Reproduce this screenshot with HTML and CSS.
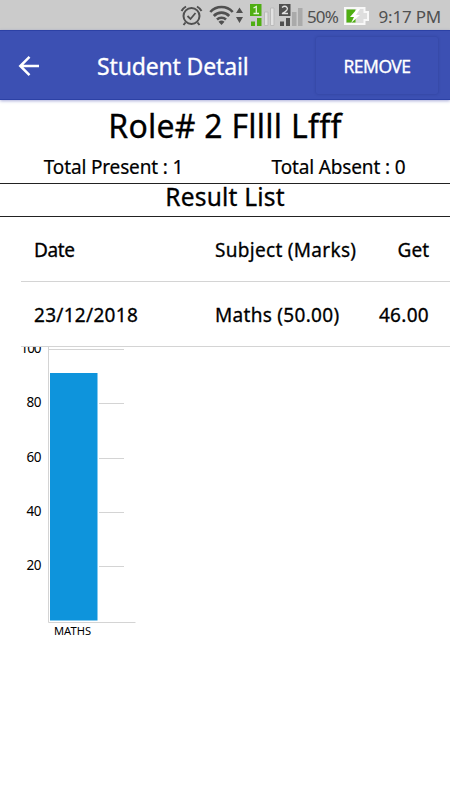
FILE: index.html
```html
<!DOCTYPE html>
<html lang="en">
<head>
    <meta charset="UTF-8">
    <meta name="viewport" content="width=device-width, initial-scale=1.0">
    <title>Student Detail</title>
    <link rel="stylesheet" href="styles.css">
</head>
<body>
    <div class="status-bar">
        <svg class="status-icons" width="132" height="30" viewBox="0 0 132 30">
            <!-- alarm -->
            <g fill="none" stroke="#505050" stroke-width="2">
                <circle cx="13.500" cy="16" r="8"/>
                <path d="M9.500 16l3 3 5-6" stroke-width="1.800"/>
                <path d="M3.500 11a12 12 0 0 1 4.500-4.500M19 6.500a12 12 0 0 1 4.500 4.500"/>
                <path d="M7.500 22.500l-2 2.500M19.500 22.500l2 2.500"/>
            </g>
            <!-- wifi -->
            <g fill="none" stroke="#505050" stroke-width="2.600">
                <path d="M32.300 12a15 15 0 0 1 22.400 0"/>
                <path d="M35.800 16a10.500 10.500 0 0 1 15.400 0"/>
                <path d="M39 19.500a6.500 6.500 0 0 1 9 0"/>
            </g>
            <path d="M43.500 25l-3-3.200a4.500 4.500 0 0 1 6 0z" fill="#505050"/>
            <path d="M58 13l3.500-5.500 3.500 5.500zM58 17l3.500 6 3.500-6z" fill="#505050"/>
            <!-- sim 1 -->
            <rect x="72" y="4" width="11.500" height="12" fill="#4fae12"/>
            <path d="M75.500 8l2.800-1.500v7M75.500 13.500h5.500" fill="none" stroke="#e4f4d8" stroke-width="1.300"/>
            <path d="M73 21.500h4v4.500h-4zM79 18h4.500v8h-4.500z" fill="#4fae12"/>
            <path d="M86.500 12h3.500v13.500h-3.500zM92.500 8h3.500v17.500h-3.500z" fill="#e2e2e2" stroke="#bbb"/>
            <!-- sim 2 -->
            <rect x="101" y="4" width="11.500" height="12" fill="#505050"/>
            <path d="M104 7.500q3-2.500 5 0t-5 6h6" fill="none" stroke="#e0e0e0" stroke-width="1.300"/>
            <path d="M102 21.500h4v4.500h-4zM108 18h4v8h-4z" fill="#505050"/>
            <path d="M114 12h4.500v14h-4.500zM120 8h4.500v18h-4.500z" fill="#aaa"/>
        </svg>
        <span class="battery-text">50%</span>
        <svg class="battery" width="26" height="18" viewBox="0 0 26 18">
            <path d="M1 1h19.500v4h3.500v8h-3.500v4h-19.500z" fill="#dedede" stroke="#f8f8f8" stroke-width="2"/>
            <rect x="2.500" y="2.500" width="9" height="13" fill="#4fae12"/>
            <path d="M13 2l-7 8h4l-3 6 9-8h-4l4-6z" fill="#fff"/>
        </svg>
        <span class="clock">9:17 PM</span>
    </div>

    <div class="toolbar">
        <svg class="back" width="22" height="22" viewBox="0 0 22 22" fill="none" stroke="#fff" stroke-width="2.500">
            <path d="M21 11H3M11.500 1.800L2.300 11l9.200 9.200"/>
        </svg>
        <h1>Student Detail</h1>
        <button type="button" class="remove-btn">REMOVE</button>
    </div>

    <div class="container">
        <h2 class="student-name">Role# 2 Fllll Lfff</h2>
        <div class="attendance">
            <span>Total Present : 1</span>
            <span>Total Absent : 0</span>
        </div>
        <h3 class="result-title">Result List</h3>
        <div class="result-row header">
            <span class="date">Date</span>
            <span class="subject">Subject (Marks)</span>
            <span class="marks">Get</span>
        </div>
        <div class="result-row">
            <span class="date">23/12/2018</span>
            <span class="subject">Maths (50.00)</span>
            <span class="marks">46.00</span>
        </div>
        <svg class="chart" width="450" height="300" viewBox="0 347 450 300">
            <path d="M48.500 347v275.500h87M48 349.500h76M99 403.500h25M99 458.500h25M99 512.500h25M99 566.500h25" fill="none" stroke="#d4d4d4"/>
            <rect x="50" y="373" width="47.500" height="247.500" fill="#0e94dc"/>
            <g class="axis" text-anchor="end">
                <text x="41.500" y="352.500" textLength="21">100</text>
                <text x="41.500" y="407" textLength="15">80</text>
                <text x="41.500" y="461.500" textLength="15">60</text>
                <text x="41.500" y="515.500" textLength="15">40</text>
                <text x="41.500" y="570" textLength="15">20</text>
            </g>
            <text class="bar-label" x="54" y="635" textLength="37" lengthAdjust="spacingAndGlyphs">MATHS</text>
        </svg>
    </div>
</body>
</html>
```

FILE: styles.css
```css
body {
    font-family: 'Noto Sans', 'Open Sans', sans-serif;
    background-color: #fff;
    color: #000;
    margin: 0;
    padding: 0;
}

h1, h2, h3 {
    margin: 0;
    font-weight: 400;
    white-space: nowrap;
}

.status-bar {
    display: flex;
    align-items: center;
    height: 30px;
    padding: 0 9px 0 178px;
    box-sizing: border-box;
    background-color: #cbcbcb;
    color: #505050;
    font-size: 17px;
    white-space: nowrap;
}

.status-icons {
    flex: none;
}

.battery-text {
    width: 34px;
    margin-top: 3px;
    letter-spacing: -0.9px;
    margin-left: -3px;
}

.battery {
    flex: none;
    margin-left: 3px;
    margin-top: 1px;
}

.clock {
    margin-left: auto;
    margin-top: 3px;
    letter-spacing: -0.2px;
}

.toolbar {
    display: flex;
    align-items: center;
    height: 70px;
    padding: 0 12px 0 18px;
    box-sizing: border-box;
    background-color: #3c50b3;
    border-top: 1px solid #2c41a5;
    border-bottom: 1px solid #2c41a5;
    box-shadow: 0 1px 3px rgba(40, 50, 160, 0.4);
    color: #fff;
}

.back {
    margin-top: 2px;
}

.toolbar h1 {
    margin-left: 57px;
    margin-top: 2px;
    font-size: 23px;
    letter-spacing: -0.15px;
    -webkit-text-stroke: 0.3px #fff;
}

.remove-btn {
    width: 122px;
    height: 57px;
    margin-left: auto;
    margin-top: 1px;
    padding: 0;
    border: none;
    border-radius: 2px;
    background-color: #3c50b3;
    box-shadow: 0 0 3px rgba(10, 20, 90, 0.28);
    color: #fff;
    font-family: inherit;
    font-size: 17.5px;
    letter-spacing: -0.5px;
    -webkit-text-stroke: 0.3px #fff;
}

.student-name {
    height: 52px;
    font-size: 32px;
    line-height: 52px;
    text-align: center;
    letter-spacing: 0.25px;
    -webkit-text-stroke: 0.3px #000;
}

.attendance {
    display: flex;
    height: 31px;
    font-size: 19px;
    line-height: 30px;
    letter-spacing: -0.15px;
}

.attendance span {
    flex: 1;
    padding-left: 2px;
    text-align: center;
    -webkit-text-stroke: 0.2px #000;
}

.result-title {
    height: 32px;
    border-top: 1px solid #222;
    border-bottom: 1px solid #222;
    font-size: 24.5px;
    letter-spacing: 0.2px;
    line-height: 25px;
    text-align: center;
    -webkit-text-stroke: 0.3px #000;
}

.result-row {
    display: flex;
    align-items: center;
    height: 62px;
    margin-left: 21px;
    padding: 2px 21px 0 13px;
    border-bottom: 1px solid #d4d4d4;
    font-size: 19px;
    letter-spacing: 0.3px;
    white-space: nowrap;
    -webkit-text-stroke: 0.3px #000;
}

.date {
    width: 181px;
}

.header .date {
    letter-spacing: -0.4px;
}

.header .marks {
    letter-spacing: 0;
}

.marks {
    margin-left: auto;
}

.chart {
    display: block;
}

.axis {
    font-size: 13.5px;
}

.bar-label {
    font-size: 10.5px;
}
```
